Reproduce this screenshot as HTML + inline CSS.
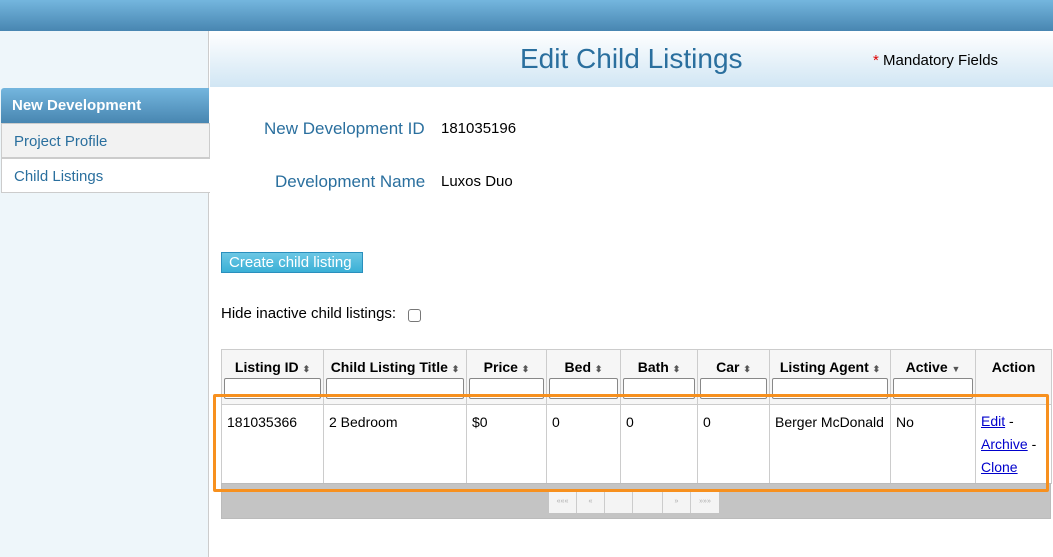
<!DOCTYPE html>
<html><head><style>
*{margin:0;padding:0;box-sizing:border-box}
body{width:1053px;height:557px;position:relative;overflow:hidden;background:#fff;font-family:"Liberation Sans",Arial,sans-serif;font-size:14px;color:#000}
.a{position:absolute}
.top{left:0;top:0;width:1053px;height:31px;background:linear-gradient(#74b6de,#4886b1)}
.side{left:0;top:31px;width:209px;height:526px;background:#eef6fa;border-right:1px solid #ccc}
.hdr{left:210px;top:31px;width:843px;height:56px;background:linear-gradient(#fff,#d1e6f4)}
.nd{left:1px;top:88px;width:208px;height:35px;background:linear-gradient(#74b6de,#4886b1);color:#fff;font-weight:bold;font-size:15px;padding:9px 0 0 11px;border-radius:3px 0 0 0}
.mi{left:1px;width:209px;height:35px;color:#2a6f9e;font-size:15px;padding:9px 0 0 12px;border:1px solid #ccc}
.lbl{color:#2a6f9e;font-size:17px}
table{position:absolute;left:221px;top:349px;border-collapse:collapse;width:830px;table-layout:fixed}
th{background:#f6f6f6;border:1px solid #ccc;font-size:14px;font-weight:bold;height:55px;vertical-align:top;padding-top:9px;text-align:center}
th i{font-style:normal;font-size:9px;color:#555}
th .in{display:block;margin:3px 2px 0 2px;height:21px;border:1px solid #888;border-radius:2px;background:#fff}
td{border-left:1px solid #ccc;border-right:1px solid #ccc;vertical-align:top;padding:9px 5px 0 5px;height:79px;font-size:14px}
a{color:#00c;}
</style></head><body>
<div class="a top"></div>
<div class="a side"></div>
<div class="a hdr"></div>
<div class="a" style="left:520px;top:43px;font-size:28px;color:#2a6f9e">Edit Child Listings</div>
<div class="a" style="left:873px;top:52px;font-size:15px"><span style="color:#d00">*</span> Mandatory Fields</div>
<div class="a nd">New Development</div>
<div class="a mi" style="top:123px;background:#f2f2f2">Project Profile</div>
<div class="a mi" style="top:158px;background:#fff;border-right:none">Child Listings</div>
<div class="a lbl" style="left:264px;top:119px">New Development ID</div>
<div class="a" style="left:441px;top:120px;font-size:15px">181035196</div>
<div class="a lbl" style="left:275px;top:172px">Development Name</div>
<div class="a" style="left:441px;top:173px;font-size:15px">Luxos Duo</div>
<div class="a" style="left:221px;top:252px;width:142px;height:21px;background:linear-gradient(#6cc7e4,#3ab0d6);border:1px solid #2a8fbd;color:#fff;font-size:15px;padding:1px 0 0 7px">Create child listing</div>
<div class="a" style="left:221px;top:305px;font-size:15px">Hide inactive child listings:</div>
<div class="a" style="left:408px;top:309px;width:13px;height:13px;border:1px solid #777;border-radius:3px"></div>
<table>
<colgroup><col style="width:102px"><col style="width:143px"><col style="width:80px"><col style="width:74px"><col style="width:77px"><col style="width:72px"><col style="width:121px"><col style="width:85px"><col style="width:76px"></colgroup>
<tr><th>Listing ID <i>&#x2B0D;</i><span class="in"></span></th><th>Child Listing Title <i>&#x2B0D;</i><span class="in"></span></th><th>Price <i>&#x2B0D;</i><span class="in"></span></th><th>Bed <i>&#x2B0D;</i><span class="in"></span></th><th>Bath <i>&#x2B0D;</i><span class="in"></span></th><th>Car <i>&#x2B0D;</i><span class="in"></span></th><th>Listing Agent <i>&#x2B0D;</i><span class="in"></span></th><th>Active <i>&#9660;</i><span class="in"></span></th><th>Action</th></tr>
<tr><td>181035366</td><td>2 Bedroom</td><td>$0</td><td>0</td><td>0</td><td>0</td><td>Berger McDonald</td><td>No</td><td style="line-height:23px;padding-top:5px"><a href="#">Edit</a> -<br><a href="#">Archive</a> -<br><a href="#">Clone</a></td></tr>
</table>
<div class="a" style="left:221px;top:483px;width:830px;height:36px;background:#c4c4c4;border:1px solid #bbb"></div>
<div class="a" style="left:549px;top:492px;width:170px;height:21px;background:#f4f4f4;display:flex;font-size:7px;color:#aaa">
<span style="width:28px;border-right:1px solid #ccc;text-align:center;padding-top:6px">«««</span><span style="width:28px;border-right:1px solid #ccc;text-align:center;padding-top:6px">«</span><span style="width:28px;border-right:1px solid #ccc"></span><span style="width:30px;border-right:1px solid #ccc"></span><span style="width:28px;border-right:1px solid #ccc;text-align:center;padding-top:6px">»</span><span style="width:28px;text-align:center;padding-top:6px">»»»</span></div>
<div class="a" style="left:213px;top:394px;width:836px;height:98px;border:3px solid #f7901e;border-radius:2px"></div>
</body></html>
